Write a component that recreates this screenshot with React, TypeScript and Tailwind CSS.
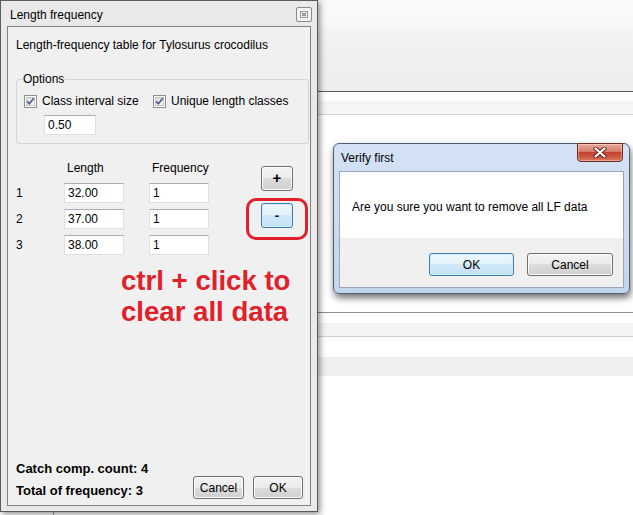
import type { ReactNode } from 'react';

const font = "font-['Liberation_Sans',Arial,sans-serif]";

const btnGray =
  'flex items-center justify-center rounded-[3px] border border-[#707070] bg-[linear-gradient(#f3f3f3_0%,#ebebeb_50%,#dddddd_50%,#cfcfcf_100%)] shadow-[inset_0_0_0_1px_#fbfbfb] text-[12px] text-black';
const btnBlue =
  'flex items-center justify-center rounded-[3px] border border-[#3c7fb1] bg-[linear-gradient(#eef7fd_0%,#e1f1fb_50%,#cfe8f8_50%,#c3e0f4_100%)] shadow-[inset_0_0_0_1px_#d6ecf9] text-[12px] text-black';
const field =
  'flex h-[20px] items-center border border-[#dde1e6] border-t-[#abadb3] bg-white pl-[3px] text-[12px] text-black';

function CheckBox() {
  return (
    <svg width="13" height="13" viewBox="0 0 13 13" className="shrink-0">
      <defs>
        <linearGradient id="cbfill" x1="0" y1="0" x2="1" y2="1">
          <stop offset="0" stopColor="#dcdcdc" />
          <stop offset="1" stopColor="#fbfbfb" />
        </linearGradient>
      </defs>
      <rect x="0.5" y="0.5" width="12" height="12" fill="#fff" stroke="#8e8f8f" />
      <rect x="2.5" y="2.5" width="8" height="8" fill="url(#cbfill)" stroke="#c6c6c6" />
      <path d="M3.2 6.4 L5.4 8.8 L9.8 3.2" fill="none" stroke="#4a5f8d" strokeWidth="1.7" />
    </svg>
  );
}

function SmallClose() {
  return (
    <span className="flex h-[15px] w-[16px] items-center justify-center rounded-[2px] border border-[#8b8b8b] bg-[#f4f4f4]">
      <svg width="8" height="7" viewBox="0 0 8 7">
        <rect x="0.5" y="0.5" width="7" height="6" fill="none" stroke="#9a9a9a" />
        <path d="M2 2 L6 5 M6 2 L2 5" stroke="#555" strokeWidth="1" />
      </svg>
    </span>
  );
}

function RedClose() {
  return (
    <span className="flex h-[19px] w-[46px] items-center justify-center rounded-b-[4px] border border-[#6e2b22] bg-[linear-gradient(#e9a99b_0%,#d47c69_45%,#c2432f_50%,#cd5a44_80%,#e0806a_100%)] shadow-[inset_0_0_0_1px_rgba(255,255,255,0.35)]">
      <svg width="14" height="11" viewBox="0 0 14 11">
        <path d="M2.5 1.5 L11.5 9.5 M11.5 1.5 L2.5 9.5" stroke="#5a1c14" strokeWidth="4" strokeLinecap="round" />
        <path d="M2.5 1.5 L11.5 9.5 M11.5 1.5 L2.5 9.5" stroke="#ffffff" strokeWidth="2.2" strokeLinecap="round" />
      </svg>
    </span>
  );
}

function Header({ children }: { children: ReactNode }) {
  return <div className="h-[17px] pl-[3px] text-[12px] leading-[16px] text-black">{children}</div>;
}

const rows = [
  { n: '1', length: '32.00', freq: '1' },
  { n: '2', length: '37.00', freq: '1' },
  { n: '3', length: '38.00', freq: '1' },
];

function LengthFrequency() {
  return (
    <div className="absolute left-0 top-0 flex h-[512px] w-[318px] flex-col border border-[#5b5b5b] bg-[#e9e9e9] px-[6px] pb-[5px] shadow-[2px_2px_6px_rgba(0,0,0,0.45)]">
      <div className="flex h-[25px] items-start justify-between pl-[3px] pt-[6px]">
        <span className="text-[12px] leading-[16px] text-black">Length frequency</span>
        <span className="-mr-[1px]">
          <SmallClose />
        </span>
      </div>

      <div className="flex flex-1 flex-col border border-[#828282] bg-[#f0f0f0] text-black">
        <p className="ml-[8px] mt-[10px] text-[12px] leading-[16px]">
          Length-frequency table for Tylosurus crocodilus
        </p>

        <fieldset className="ml-[8px] mr-[1px] mt-[18px] rounded-[3px] border border-[#d0d6db] pb-[8px]">
          <legend className="ml-[5px] px-[1px] text-[12px] leading-[16px]">Options</legend>
          <div className="pl-[7px]">
            <div className="mt-[6px] flex h-[16px] items-center text-[12px]">
              <div className="flex w-[129px] items-center gap-[5px]">
                <CheckBox />
                <span>Class interval size</span>
              </div>
              <div className="flex items-center gap-[5px]">
                <CheckBox />
                <span>Unique length classes</span>
              </div>
            </div>
            <div className={`${field} ml-[20px] mt-[6px] w-[52px]`}>0.50</div>
          </div>
        </fieldset>

        <div className="ml-[8px] flex">
          <div className="mt-[16px] grid grid-cols-[48px_60px_25px_60px] items-center gap-y-[6px] text-[12px]">
            <div className="h-[17px]" />
            <Header>Length</Header>
            <div className="h-[17px]" />
            <Header>Frequency</Header>
            {rows.map((r) => (
              <div key={r.n} className="contents">
                <span className="leading-[16px]">{r.n}</span>
                <div className={field}>{r.length}</div>
                <div />
                <div className={field}>{r.freq}</div>
              </div>
            ))}
          </div>

          <div className="ml-[52px] mt-[22px] flex flex-col gap-[12px]">
            <div className={`${btnGray} h-[25px] w-[32px] text-[15px] font-bold`}>+</div>
            <div className="relative">
              <div className={`${btnBlue} h-[25px] w-[32px] text-[13px] font-bold`}>-</div>
              <div className="absolute -left-[15px] -top-[5px] h-[42px] w-[62px] rounded-[10px] border-[3px] border-[#e0202a]" />
            </div>
          </div>
        </div>

        <p className="ml-[113px] mt-[10px] text-[27.6px] font-bold leading-[31px] text-[#e0202a]">
          ctrl + click to
          <br />
          clear all data
        </p>

        <div className="mt-auto flex items-end justify-between pb-[6px] pl-[8px] pr-[7px]">
          <div className="flex flex-col gap-[6px] text-[13px] font-bold leading-[16px]">
            <span>Catch comp. count: 4</span>
            <span>Total of frequency: 3</span>
          </div>
          <div className="flex gap-[9px]">
            <div className={`${btnGray} h-[23px] w-[51px]`}>Cancel</div>
            <div className={`${btnGray} h-[23px] w-[50px]`}>OK</div>
          </div>
        </div>
      </div>
    </div>
  );
}

function VerifyFirst() {
  return (
    <div className="absolute left-[333px] top-[143px] flex h-[151px] w-[297px] flex-col rounded-[6px] border border-[#505e72] bg-[linear-gradient(#d3e2f4_0%,#cddcf0_50%,#c3d6ee_100%)] px-[5px] pb-[5px] shadow-[1px_4px_7px_rgba(0,0,0,0.55)]">
      <div className="flex h-[27px] items-start justify-between pl-[2px]">
        <span className="mt-[6px] text-[12px] leading-[16px] text-black">Verify first</span>
        <span className="-mt-[1px] mr-[1px]">
          <RedClose />
        </span>
      </div>
      <div className="flex flex-1 flex-col border border-[#98a6b8] bg-white">
        <div className="flex-1 pl-[12px] pt-[27px] text-[12px] leading-[16px] text-black">
          Are you sure you want to remove all LF data
        </div>
        <div className="flex h-[49px] justify-end gap-[13px] bg-[#f0f0f0] pr-[10px] pt-[15px]">
          <div className={`${btnBlue} h-[23px] w-[85px]`}>OK</div>
          <div className={`${btnGray} h-[23px] w-[86px]`}>Cancel</div>
        </div>
      </div>
    </div>
  );
}

export default function App() {
  return (
    <div className={`${font} relative h-[515px] w-[633px] overflow-hidden bg-white`}>
      <div className="flex flex-col">
        <div className="h-[92px] border-b border-[#5c5c5c] bg-[linear-gradient(#f9f9f9_0px,#f8f8f8_24px,#f4f4f4_30px,#efefef_62px,#eeeeee_91px)]" />
        <div className="h-[9px] bg-white" />
        <div className="h-[14px] border-b border-[#d4d4d4] bg-[#f4f5f7]" />
        <div className="h-[198px] border-b border-[#8f8f8f] bg-white" />
        <div className="h-[10px] bg-white" />
        <div className="h-[14px] border-b border-[#cfcfcf] bg-[#f3f4f6]" />
        <div className="h-[20px] bg-white" />
        <div className="h-[19px] bg-[#efefef]" />
      </div>
      <div className="absolute left-[53px] top-[505px] h-[10px] w-px bg-[#9a9a9a]" />
      <LengthFrequency />
      <VerifyFirst />
    </div>
  );
}
